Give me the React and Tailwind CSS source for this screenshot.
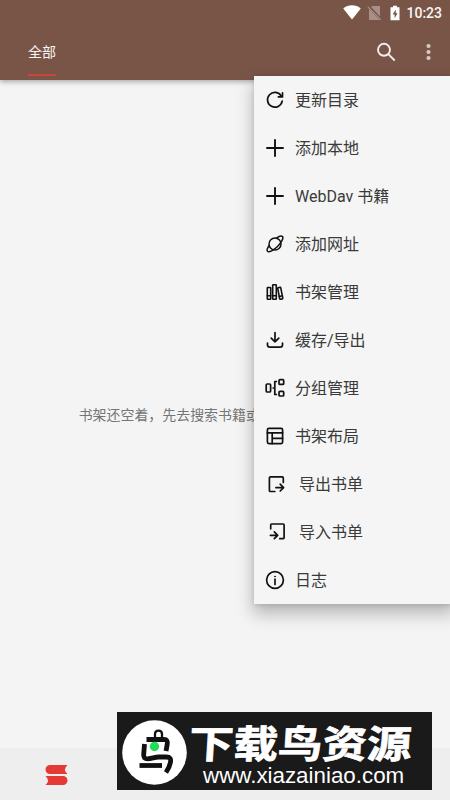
const menuItems = [
  { icon: 'refresh', label: '更新目录' },
  { icon: 'plus', label: '添加本地' },
  { icon: 'plus', label: 'WebDav 书籍' },
  { icon: 'planet', label: '添加网址' },
  { icon: 'books', label: '书架管理' },
  { icon: 'download', label: '缓存/导出' },
  { icon: 'group', label: '分组管理' },
  { icon: 'layout', label: '书架布局' },
  { icon: 'export', label: '导出书单', indent: true },
  { icon: 'import', label: '导入书单', indent: true },
  { icon: 'info', label: '日志' },
];

const icons = {
  refresh: (
    <>
      <path d="M19.200 13.200A7.400 7.400 0 1 1 18.300 8" />
      <path d="M19.500 4.800v4.100h-4.100" />
    </>
  ),
  plus: <path d="M12 4v16M4 12h16" strokeWidth="1.900" />,
  planet: (
    <g strokeWidth="1.500">
      <circle cx="12" cy="12" r="6" />
      <path d="M6.200 13.500C4.200 16.300 3.600 18.200 4.500 19.200c1.500 1.500 6.200-1 10-4.700s6.400-8.500 5-10c-1-1-3.400-.4-6 1.600" />
    </g>
  ),
  books: (
    <g strokeWidth="1.600">
      <rect x="4.300" y="7.500" width="3.400" height="11.800" rx=".6" />
      <rect x="9.700" y="4.700" width="3.600" height="14.600" rx=".6" />
      <rect x="15.700" y="7.400" width="3.100" height="11.800" rx=".6" transform="rotate(-11 17.200 13.300)" />
      <path d="M4.300 15.800h3.400M9.700 15.800h3.600M16.200 16.500l3.200-.7" />
    </g>
  ),
  download: <path d="M12 4.500v9.300M8.200 10.200l3.800 3.700 3.800-3.700M4.500 15v1.800c0 1.400.9 2.400 2.400 2.400h10.200c1.500 0 2.400-1 2.400-2.400V15" />,
  group: (
    <>
      <rect x="3.200" y="8" width="4.400" height="8" rx="1" />
      <rect x="16" y="3.700" width="4.700" height="4.700" rx="1" />
      <rect x="16" y="15.300" width="4.700" height="4.700" rx="1" />
      <path d="M13.400 5.500h-1.600v13h1.600M10.200 12h1.600" />
    </>
  ),
  layout: (
    <>
      <rect x="4.400" y="4.400" width="15.200" height="15.200" rx="1.500" />
      <path d="M4.400 8.900h15.200M9.200 8.900v10.700M9.200 14.300h10.400" />
    </>
  ),
  export: (
    <>
      <path d="M20.300 10.500V5.900c0-.7-.3-1-1-1H7.400c-.7 0-1 .3-1 1v12.600c0 .7.3 1 1 1h4.400" />
      <path d="M12.900 15.600h7.400M17.200 12.200l3.400 3.400-3.400 3.400" />
    </>
  ),
  import: (
    <>
      <path d="M7.700 8.800V4.900c0-.7.300-.9.900-.9h11.600c.6 0 .9.200.9.900v12.900c0 .7-.3.900-.9.900h-3.400" />
      <path d="M7.400 15.300h7.300M11.300 11.900l3.400 3.400-3.400 3.400" />
    </>
  ),
  info: (
    <>
      <circle cx="12" cy="12" r="8.400" />
      <path d="M12 11v5.500" />
      <circle cx="12" cy="8.500" r=".5" strokeWidth="1" />
    </>
  ),
};

function StatusBar() {
  return (
    <div className="flex h-[25px] items-center justify-end pr-[8px] text-white">
      <svg width="18" height="15" viewBox="0 0 18 15" fill="currentColor">
        <path d="M.2 3.500C5.200-.8 12.800-.8 17.800 3.500L9 14.500z" />
      </svg>
      <svg className="ml-[6px] opacity-35" width="15" height="16" viewBox="0 0 15 16" fill="currentColor">
        <path d="M5 1h8v10.500L4.200 2zM2 4l10.800 11H2z" />
        <path d="M.8 1.800l13 13" stroke="currentColor" strokeWidth="1.200" />
      </svg>
      <svg className="ml-[7px]" width="12" height="16" viewBox="0 0 12 16">
        <path d="M4 .8h4v1.500h2.500v13h-9v-13H4z" fill="currentColor" />
        <path d="M6.800 4.500L3.600 9.400h2v3.800l3-5H6.800z" fill="#795548" />
      </svg>
      <span className="mt-px ml-[5px] text-[14px] leading-none font-medium text-[#fbf6f4]">10:23</span>
    </div>
  );
}

function Header() {
  return (
    <header className="h-20 bg-[#795548] shadow-[0_2px_5px_rgba(0,0,0,0.3)]">
      <StatusBar />
      <div className="flex h-[55px] items-start justify-between pr-[11px] pl-7">
        <div className="flex h-[51px] w-7 flex-col justify-between border-b-2 border-[#c9453e] pt-[17px]">
          <span className="text-[14px] leading-5 whitespace-nowrap text-[#fbf3f0]">全部</span>
        </div>
        <div className="flex gap-[21px] pt-[15px] text-[#f5eeeb]">
          <svg width="24" height="24" viewBox="0 0 24 24" fill="none" stroke="currentColor" strokeWidth="1.900">
            <circle cx="10" cy="9.800" r="6" />
            <path d="M14.300 14.100l6.400 6.400" />
          </svg>
          <svg width="20" height="24" viewBox="0 0 20 24" fill="#d9c9c4">
            <circle cx="9.500" cy="6" r="2.100" />
            <circle cx="9.500" cy="12" r="2.100" />
            <circle cx="9.500" cy="18" r="2.100" />
          </svg>
        </div>
      </div>
    </header>
  );
}

function Menu() {
  return (
    <div className="absolute top-[76px] left-[254px] w-[200px] bg-[#f5f5f5] shadow-[0_9px_16px_1px_rgba(0,0,0,0.25),0_1px_5px_rgba(0,0,0,0.12)]">
      {menuItems.map(({ icon, label, indent }) => (
        <div key={label} className="flex h-12 items-center pl-[8.500px]">
          <svg width="24" height="24" viewBox="0 0 24 24" fill="none" stroke="#111" strokeWidth="1.700" strokeLinecap="round" strokeLinejoin="round">
            {icons[icon]}
          </svg>
          <span className={`mt-0.5 text-[16px] leading-6 text-[#3a3a3a] ${indent ? 'ml-[12.500px]' : 'ml-[8.500px]'}`}>{label}</span>
        </div>
      ))}
    </div>
  );
}

function Watermark() {
  return (
    <div className="absolute top-[712px] left-[117px] flex h-[78px] w-[315px] overflow-hidden bg-[#1a1a1a] text-white">
      <svg className="mt-2 ml-[5px] shrink-0" width="65" height="65" viewBox="0 0 65 65" fill="none">
        <circle cx="32.500" cy="32.500" r="32.300" fill="#fff" />
        <g stroke="#111" strokeWidth="4.800" strokeLinejoin="round">
          <path d="M33 17v-3c0-4.500 7-4.500 7 0v3.500" strokeWidth="2.300" />
          <path d="M24.500 19.500h17.500c3 0 3.700 1.500 3.200 5l-1.200 6.500" />
          <path d="M22.500 24l-.8 10.500c-.2 3 1 4.300 4 4.300 4 0 7-1.800 11-1.800h7.500c4 0 5 2 4.200 5.500-.6 3.300-2 6.500-4.400 10" />
          <path d="M17.500 45.500h22.500" />
        </g>
        <circle cx="32.500" cy="26.500" r="4.700" fill="#22dc5c" />
      </svg>
      <div className="ml-[2px] flex flex-col">
        <span className="mt-[13px] h-[40px] origin-left -skew-x-3 scale-y-[0.860] text-[44.500px] leading-[40px] font-bold whitespace-nowrap [-webkit-text-stroke:0.900px_white]">下载鸟资源</span>
        <span className="ml-[14px] font-['Liberation_Sans'] text-[22.350px] leading-[22px] whitespace-nowrap">www.xiazainiao.com</span>
      </div>
    </div>
  );
}

export default function App() {
  return (
    <div className="relative flex h-[800px] w-[450px] flex-col overflow-hidden bg-[#f4f4f4] font-[Roboto,'Noto_Sans_CJK_SC',sans-serif]">
      <Header />
      <main className="flex flex-1 justify-center pt-[325px]">
        <p className="text-[13.950px] leading-5 whitespace-nowrap text-[#757575]">书架还空着，先去搜索书籍或从发现里添加吧！</p>
      </main>
      <nav className="flex h-[52px] items-center bg-[#eeeeee] pt-[2px] pl-[45px]">
        <svg width="23" height="22" viewBox="0 0 23 22" fill="#e53935">
          <path d="M5 1h17.500q-5 4.500 0 9H5A4.500 4.500 0 0 1 5 1z" />
          <path d="M18 12H.5q5 4.500 0 9H18a4.500 4.500 0 0 0 0-9z" />
        </svg>
      </nav>
      <Menu />
      <Watermark />
    </div>
  );
}
